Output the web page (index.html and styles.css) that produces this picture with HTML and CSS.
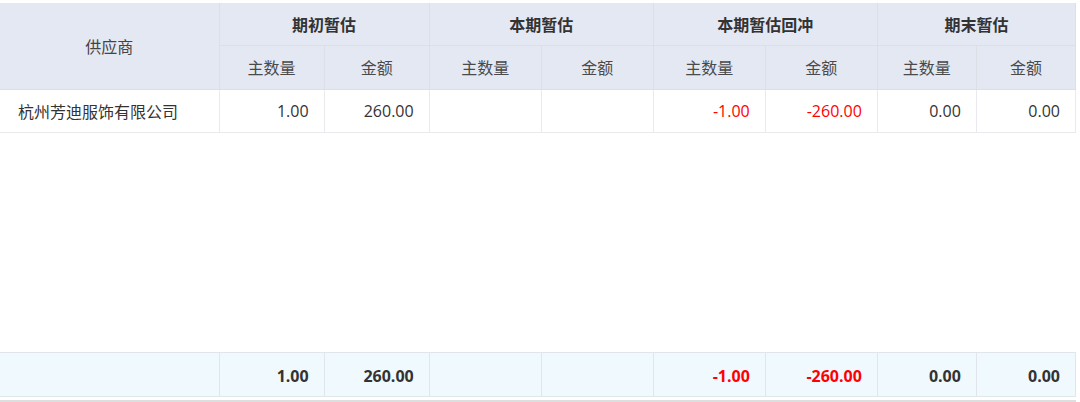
FILE: index.html
```html
<!DOCTYPE html>
<html lang="zh-CN">
<head>
<meta charset="utf-8">
<title>暂估汇总</title>
<link rel="stylesheet" href="styles.css">
</head>
<body>
<div class="page">
  <table class="grid head-grid">
    <colgroup>
      <col class="c-name"><col class="c-a"><col class="c-b"><col class="c-m"><col class="c-m"><col class="c-m"><col class="c-m"><col class="c-e"><col class="c-e">
    </colgroup>
    <thead>
      <tr class="h1">
        <th rowspan="2" class="th-name">供应商</th>
        <th colspan="2">期初暂估</th>
        <th colspan="2">本期暂估</th>
        <th colspan="2">本期暂估回冲</th>
        <th colspan="2">期末暂估</th>
      </tr>
      <tr class="h2">
        <th>主数量</th><th>金额</th>
        <th>主数量</th><th>金额</th>
        <th>主数量</th><th>金额</th>
        <th>主数量</th><th>金额</th>
      </tr>
    </thead>
    <tbody>
      <tr class="row">
        <td class="name">杭州芳迪服饰有限公司</td>
        <td class="num">1.00</td>
        <td class="num">260.00</td>
        <td class="num"></td>
        <td class="num"></td>
        <td class="num neg">-1.00</td>
        <td class="num neg">-260.00</td>
        <td class="num">0.00</td>
        <td class="num">0.00</td>
      </tr>
    </tbody>
  </table>
  <div class="filler"></div>
  <table class="grid foot-grid">
    <colgroup>
      <col class="c-name"><col class="c-a"><col class="c-b"><col class="c-m"><col class="c-m"><col class="c-m"><col class="c-m"><col class="c-e"><col class="c-e">
    </colgroup>
    <tbody>
      <tr class="sum">
        <td></td>
        <td class="num">1.00</td>
        <td class="num">260.00</td>
        <td class="num"></td>
        <td class="num"></td>
        <td class="num neg">-1.00</td>
        <td class="num neg">-260.00</td>
        <td class="num">0.00</td>
        <td class="num">0.00</td>
      </tr>
    </tbody>
  </table>
  <div class="scroll-track"></div>
</div>
</body>
</html>
```

FILE: styles.css
```css
html, body {
  margin: 0;
  padding: 0;
  background: #ffffff;
}

.page {
  width: 1080px;
  height: 402px;
  padding-top: 3px;
  box-sizing: border-box;
  display: flex;
  flex-direction: column;
  font-family: "Open Sans", "Noto Sans CJK SC", sans-serif;
  color: #333333;
}

.grid {
  width: 1076px;
  border-collapse: collapse;
  table-layout: fixed;
  flex: none;
}

.c-name { width: 219px; }
.c-a { width: 105px; }
.c-b { width: 105px; }
.c-m { width: 112px; }
.c-e { width: 99px; }

.grid th,
.grid td {
  border: 1px solid #dcdfe6;
  padding: 0;
  box-sizing: border-box;
}

.grid tr > :first-child {
  border-left: none;
}

.head-grid thead th {
  background: #e4e8f3;
  text-align: center;
  font-family: "Noto Sans CJK SC", sans-serif;
}

.h1 th {
  height: 42px;
  font-size: 16px;
  font-weight: 700;
  color: #333333;
  border-top: none;
}

.h2 th {
  height: 44px;
  font-size: 16px;
  font-weight: 400;
  color: #4a4a4a;
}

.th-name {
  font-weight: 400 !important;
  color: #444444 !important;
  font-size: 16px !important;
}

.row td {
  height: 43px;
  font-size: 16px;
  background: #ffffff;
  border-color: #e8eaee;
}

.name {
  text-align: left;
  padding-left: 18px !important;
  font-family: "Noto Sans CJK SC", sans-serif;
  font-size: 16px !important;
  color: #333333;
}

.num {
  text-align: right;
  padding-right: 15px !important;
  font-family: "Open Sans", sans-serif;
  font-size: 16px;
}

.neg {
  color: #ff0000;
}

.filler {
  flex: 1;
}

.foot-grid td {
  height: 44px;
  padding-top: 3px;
  background: #f0f9fd;
  border-color: #e1e6ea;
  font-weight: 700;
  font-size: 16px;
  color: #333333;
}

.foot-grid td.neg {
  color: #ff0000;
}

.scroll-track {
  flex: none;
  height: 2px;
  margin-top: 3px;
  background: #dedede;
  width: 1076px;
}
```
